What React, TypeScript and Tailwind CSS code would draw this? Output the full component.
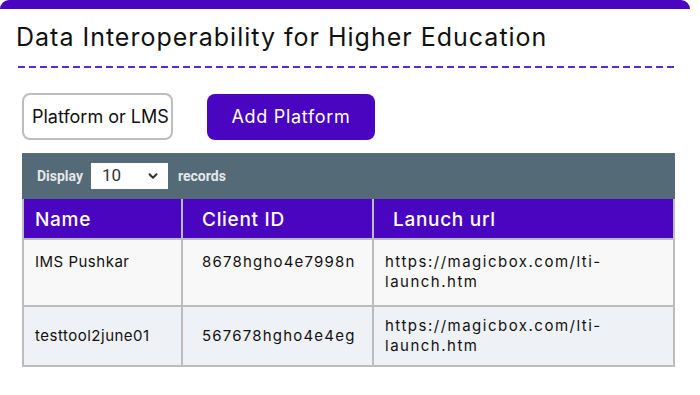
import { ChevronDown } from 'lucide-react';

const rows = [
  { name: 'IMS Pushkar', clientId: '8678hgho4e7998n', url: 'https://magicbox.com/lti-launch.htm', cls: 'bg-[#f8f8f8] h-[67px] align-top', pad: 'pt-[12px]' },
  { name: 'testtool2june01', clientId: '567678hgho4e4eg', url: 'https://magicbox.com/lti-launch.htm', cls: 'bg-[#eef1f6] h-[59px] align-middle', pad: 'py-[9px]' },
];

export default function App() {
  return (
    <div className="w-[700px] h-[395px] bg-white font-['Inter',sans-serif] text-[#111]">
      <div className="w-[690px] h-[9px] bg-[#4a05c0] rounded-t-[10px]" />
      <h1 className="ml-4 mt-[13px] text-[25px] leading-[31px] tracking-[1px]">
        Data Interoperability for Higher Education
      </h1>
      <div className="ml-[18px] mt-[13px] w-[656px] h-[2px] bg-[repeating-linear-gradient(to_right,#5a2ad6_0_7px,transparent_7px_11px)]" />

      <div className="ml-[22px] mt-[25px] flex items-center gap-[34px]">
        <div className="w-[151px] h-[47px] rounded-[8px] border-2 border-[#bdbdbd] flex items-center pl-[8px] text-[18px] whitespace-nowrap">
          Platform or LMS
        </div>
        <button className="w-[168px] h-[46px] rounded-[8px] bg-[#4a05c0] text-white text-[18px] tracking-[0.7px]">
          Add Platform
        </button>
      </div>

      <div className="ml-[22px] mt-[13px] w-[653px]">
        <div className="h-[46px] bg-[#546a76] flex items-center pl-[15px] font-['Roboto',sans-serif] font-bold text-[14px] text-[#e3e8eb]">
          <span>Display</span>
          <div className="ml-[8px] w-[77px] h-[26px] bg-white flex items-center justify-between pl-[11px] pr-[8px] font-normal text-[17px] text-[#333]">
            <span>10</span>
            <ChevronDown className="w-[14px] h-[14px]" strokeWidth={3.5} />
          </div>
          <span className="ml-[10px]">records</span>
        </div>
        <table className="w-full border-collapse border-2 border-[#bcbcbc] border-t-0 table-fixed">
          <colgroup>
            <col className="w-[159px]" />
            <col className="w-[191px]" />
            <col />
          </colgroup>
          <thead>
            <tr className="h-[40px] bg-[#4a05c0] text-white text-[19px] text-left tracking-[0.7px]">
              <th className="pl-[11px] pt-[3px] font-medium border-r-2 border-[#bcbcbc]">Name</th>
              <th className="pl-[19px] pt-[3px] font-medium border-r-2 border-[#bcbcbc]">Client ID</th>
              <th className="pl-[19px] pt-[3px] font-medium">Lanuch url</th>
            </tr>
          </thead>
          <tbody className="text-[15px] leading-[20px]">
            {rows.map((r, i) => (
              <tr key={i} className={`${r.cls} border-t-2 border-[#bcbcbc]`}>
                <td className={`${r.pad} pl-[11px] border-r-2 border-[#bcbcbc] tracking-[0.5px]`}>{r.name}</td>
                <td className={`${r.pad} pl-[19px] border-r-2 border-[#bcbcbc] tracking-[1.2px]`}>{r.clientId}</td>
                <td className={`${r.pad} pl-[11px] pr-[50px] tracking-[1.5px] break-words`}>{r.url}</td>
              </tr>
            ))}
          </tbody>
        </table>
      </div>
    </div>
  );
}
